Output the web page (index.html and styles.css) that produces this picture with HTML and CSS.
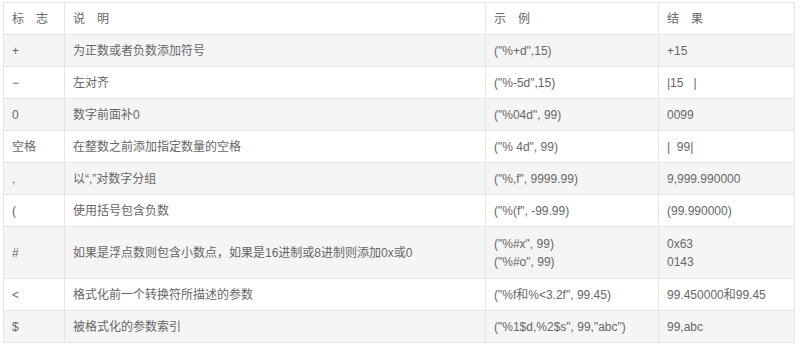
FILE: index.html
```html
<!DOCTYPE html>
<html lang="zh-CN">
<head>
    <meta charset="UTF-8">
    <title>格式化标志</title>
    <link rel="stylesheet" href="styles.css">
</head>
<body>
    <table class="flags">
        <colgroup>
            <col class="c-flag">
            <col class="c-desc">
            <col class="c-demo">
            <col class="c-result">
        </colgroup>
        <thead>
            <tr><th>标　志</th><th>说　明</th><th>示　例</th><th>结　果</th></tr>
        </thead>
        <tbody>
            <tr><td>+</td><td>为正数或者负数添加符号</td><td>("%+d",15)</td><td>+15</td></tr>
            <tr><td>−</td><td>左对齐</td><td>("%-5d",15)</td><td>|15&nbsp;&nbsp;&nbsp;|</td></tr>
            <tr><td>0</td><td>数字前面补0</td><td>("%04d", 99)</td><td>0099</td></tr>
            <tr><td>空格</td><td>在整数之前添加指定数量的空格</td><td>("% 4d", 99)</td><td>|&nbsp;&nbsp;99|</td></tr>
            <tr><td>,</td><td>以“,”对数字分组</td><td>("%,f", 9999.99)</td><td>9,999.990000</td></tr>
            <tr><td>(</td><td>使用括号包含负数</td><td>("%(f", -99.99)</td><td>(99.990000)</td></tr>
            <tr class="tall"><td>#</td><td>如果是浮点数则包含小数点，如果是16进制或8进制则添加0x或0</td><td>("%#x", 99)<br>("%#o", 99)</td><td>0x63<br>0143</td></tr>
            <tr><td>&lt;</td><td>格式化前一个转换符所描述的参数</td><td>("%f和%&lt;3.2f", 99.45)</td><td>99.450000和99.45</td></tr>
            <tr><td>$</td><td>被格式化的参数索引</td><td>("%1$d,%2$s", 99,"abc")</td><td>99,abc</td></tr>
        </tbody>
    </table>
</body>
</html>
```

FILE: styles.css
```css
body {
    margin: 0;
    background: #fff;
    font-family: "Liberation Sans", "Noto Sans CJK SC", sans-serif;
    font-size: 12px;
    color: #666;
}
.flags {
    border-collapse: collapse;
    table-layout: fixed;
    width: 791px;
    margin: 2px 0 0 3px;
    border: 1px solid #e4e4e4;
}
.c-flag { width: 61px; }
.c-desc { width: 421px; }
.c-demo { width: 173px; }
.c-result { width: 136px; }
.flags th,
.flags td {
    border: 1px solid #e6e6e6;
    height: 32px;
    padding: 0 8px;
    line-height: 18px;
    text-align: left;
    font-weight: normal;
    vertical-align: middle;
    white-space: nowrap;
    box-sizing: border-box;
}
.flags .tall td {
    height: 52px;
}
.flags tbody tr:nth-child(odd) {
    background: #f5f5f5;
}
```
